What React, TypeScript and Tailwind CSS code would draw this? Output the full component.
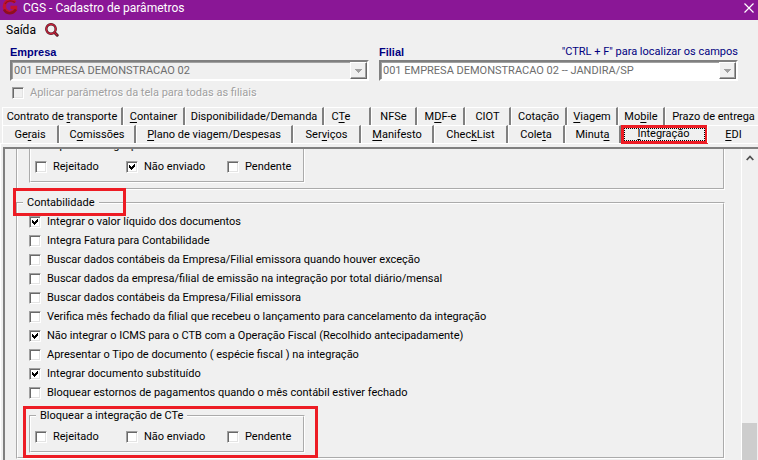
import { useState } from "react";
import type { ReactNode } from "react";

const TABS_TOP = [
  { id: "contrato", label: <>Contrato de <u>t</u>ransporte</>, width: "w-[121px]" },
  { id: "container", label: <><u>C</u>ontainer</>, width: "w-[62px]" },
  { id: "disponibilidade", label: <>Disponibilidade/Demanda</>, width: "w-[139px]" },
  { id: "cte", label: <>C<u>T</u>e</>, width: "w-[47px] pr-[12px]" },
  { id: "nfse", label: <>NFSe</>, width: "w-[46px]" },
  { id: "mdfe", label: <>M<u>D</u>F-e</>, width: "w-[48px]" },
  { id: "ciot", label: <>CIOT</>, width: "w-[46px]" },
  { id: "cotacao", label: <>Cotação</>, width: "w-[56px]" },
  { id: "viagem", label: <><u>V</u>iagem</>, width: "w-[51px]" },
  { id: "mobile", label: <>Mo<u>b</u>ile</>, width: "w-[47px]" },
  { id: "prazo", label: <>Prazo de entrega</>, width: "w-[96px]" },
];

const TABS_BOTTOM = [
  { id: "gerais", label: <>Ge<u>r</u>ais</>, width: "w-[57px]" },
  { id: "comissoes", label: <>C<u>o</u>missões</>, width: "w-[77px]" },
  { id: "plano", label: <><u>P</u>lano de viagem/Despesas</>, width: "w-[157px]" },
  { id: "servicos", label: <>Ser<u>v</u>iços</>, width: "w-[68px]" },
  { id: "manifesto", label: <><u>M</u>anifesto</>, width: "w-[73px]" },
  { id: "checklist", label: <>Chec<u>k</u>List</>, width: "w-[74px]" },
  { id: "coleta", label: <>Cole<u>t</u>a</>, width: "w-[57px]" },
  { id: "minuta", label: <>Minut<u>a</u></>, width: "w-[56px]" },
  { id: "integracao", label: <><u>I</u>ntegração</>, width: "w-[86px]" },
  { id: "edi", label: <><u>E</u>DI</>, width: "w-[52px]" },
];

const OPTIONS = [
  { label: "Integrar o valor líquido dos documentos", checked: true },
  { label: "Integra Fatura para Contabilidade" },
  { label: "Buscar dados contábeis da Empresa/Filial emissora quando houver exceção" },
  { label: "Buscar dados da empresa/filial de emissão na integração por total diário/mensal" },
  { label: "Buscar dados contábeis da Empresa/Filial emissora" },
  { label: "Verifica mês fechado da filial que recebeu o lançamento para cancelamento da integração" },
  { label: "Não integrar o ICMS para o CTB com a Operação Fiscal (Recolhido antecipadamente)", checked: true },
  { label: "Apresentar o Tipo de documento ( espécie fiscal ) na integração" },
  { label: "Integrar documento substituído", checked: true },
  { label: "Bloquear estornos de pagamentos quando o mês contábil estiver fechado" },
];

function Check({ label, checked = false, disabled = false }: { label: string; checked?: boolean; disabled?: boolean }) {
  return (
    <label className={`flex items-center gap-[6px] whitespace-nowrap ${disabled ? "text-[#a0a0a0] [text-shadow:1px_1px_0_#fff]" : ""}`}>
      <span className="grid size-3 shrink-0">
        <input
          type="checkbox"
          defaultChecked={checked}
          disabled={disabled}
          className="peer col-start-1 row-start-1 size-3 appearance-none border border-t-[#a0a0a0] border-l-[#a0a0a0] border-r-white border-b-white bg-white shadow-[inset_1px_1px_0_#696969,inset_-1px_-1px_0_#e3e3e3] disabled:bg-[#f0f0f0]"
        />
        <svg viewBox="0 0 12 12" className="pointer-events-none invisible col-start-1 row-start-1 size-3 peer-checked:visible" shapeRendering="crispEdges">
          <path d="M3 4h1v1h1v1h1v-1h1v-1h1v-1h1v3h-1v1h-1v1h-1v1h-1v-1h-1v-1h-1z" fill="#000" />
        </svg>
      </span>
      {label}
    </label>
  );
}

function Group({ title, className = "", children }: { title: string; className?: string; children: ReactNode }) {
  return (
    <fieldset className={`min-w-0 border-2 border-white [border-style:groove] ${className}`}>
      <legend className="px-1 leading-[14px]">{title}</legend>
      {children}
    </fieldset>
  );
}

function BloquearCte({ enviado = false }: { enviado?: boolean }) {
  return (
    <Group title="Bloquear a integração de CTe" className="w-[276px] px-1 pt-[5px] pb-[5px] [&>legend]:ml-px">
      <div className="grid h-[18px] grid-cols-[91px_101px_auto] items-center">
        <Check label="Rejeitado" />
        <Check label="Não enviado" checked={enviado} />
        <Check label="Pendente" />
      </div>
    </Group>
  );
}

function Combo({ id, value, fill }: { id: string; value: string; fill: string }) {
  return (
    <div className="relative">
      <select
        id={id}
        disabled
        className={`block h-[21px] w-full appearance-none border-2 border-t-[#808080] border-l-[#808080] border-r-white border-b-white pl-[2px] text-[11px] leading-4 text-[#6d6d6d] opacity-100 shadow-[inset_1px_1px_0_#a0a0a0] ${fill}`}
      >
        <option>{value}</option>
      </select>
      <span className="pointer-events-none absolute inset-y-[2px] right-[2px] flex w-[17px] items-center justify-center border border-t-white border-l-white border-r-[#696969] border-b-[#696969] bg-[#f0f0f0] shadow-[inset_-1px_-1px_0_#a0a0a0]">
        <svg viewBox="0 0 7 4" className="h-1 w-[7px]" shapeRendering="crispEdges">
          <path d="M0 0h7v1h-1v1h-1v1h-1v1h-1v-1h-1v-1h-1v-1h-1z" fill="#a0a0a0" />
        </svg>
      </span>
    </div>
  );
}

export default function App() {
  const [tab, setTab] = useState("integracao");

  const renderTab = (t: { id: string; label: ReactNode; width: string }) => {
    const active = t.id === tab;
    return (
      <button
        key={t.id}
        role="tab"
        aria-selected={active}
        onClick={() => setTab(t.id)}
        className={`relative h-[18px] shrink-0 whitespace-nowrap border-t border-l border-r-2 border-t-white border-l-white border-r-[#808080] text-center last:border-r-0 ${active ? "pb-[2px] leading-[14px]" : "leading-[16px]"} ${t.width}`}
      >
        {t.label}
        {active && (
          <span className="pointer-events-none absolute -top-px -right-[3px] -bottom-px -left-px border-[3px] border-[#ed1c24]">
            <span className="absolute inset-0 border border-dotted border-black" />
          </span>
        )}
      </button>
    );
  };

  return (
    <div className="flex h-screen flex-col overflow-hidden bg-[#f0f0f0] font-[Roboto,sans-serif] text-[11px] leading-4 text-black [&_u]:underline-offset-2">
      {/* Title bar */}
      <header className="flex h-5 shrink-0 items-center bg-[#8a1796] text-white">
        <svg viewBox="0 0 18 20" className="ml-px h-5 w-[18px]" fill="none">
          <path d="M14 2.500A6 6 0 1 0 14.500 9.500V7.500H9.500" stroke="#c4122f" strokeWidth="3.400" />
          <path d="M3 9.500C5 14 11 15 15 9.500" stroke="#8c1020" strokeWidth="2.400" />
          <path d="M14 2.500C10.500 0 6 0.500 4 4" stroke="#8c1020" strokeWidth="1.200" />
        </svg>
        <h1 className="ml-1 flex-1 pb-1 text-[12px] leading-4">CGS - Cadastro de parâmetros</h1>
        <button aria-label="Fechar" className="mr-[4px] pb-1">
          <svg viewBox="0 0 10 10" className="size-[10px]">
            <path d="M0.500 0.500L9.500 9.500M9.500 0.500L0.500 9.500" stroke="#fff" strokeWidth="1.200" />
          </svg>
        </button>
      </header>

      {/* Menu */}
      <nav className="flex h-5 shrink-0 items-center gap-[9px] pl-[6px] text-[12px]">
        <button>Saída</button>
        <button aria-label="Localizar">
          <svg viewBox="0 0 14 14" className="size-[14px]" fill="none">
            <path d="M9.500 9.500L12.200 12.200" stroke="#4a1a22" strokeWidth="3" strokeLinecap="round" />
            <circle cx="6" cy="6" r="4.700" stroke="#4a1a22" strokeWidth="2.400" />
            <circle cx="6" cy="6" r="4.700" stroke="#c8203a" strokeWidth="1.400" />
            <path d="M9.800 9.800L12 12" stroke="#c8203a" strokeWidth="1.200" strokeLinecap="round" />
          </svg>
        </button>
      </nav>

      <div className="grid shrink-0 grid-cols-2 gap-[10px] pt-[4px] pr-5 pl-[10px]">
        <div>
          <label htmlFor="empresa" className="block font-['Liberation_Sans',sans-serif] font-bold text-[#000080]">
            Empresa
          </label>
          <Combo id="empresa" value="001 EMPRESA DEMONSTRACAO 02" fill="bg-[#f0f0f0]" />
        </div>
        <div>
          <div className="flex justify-between text-[#000080]">
            <label htmlFor="filial" className="font-['Liberation_Sans',sans-serif] font-bold">
              Filial
            </label>
            <span>"CTRL + F" para localizar os campos</span>
          </div>
          <Combo id="filial" value="001 EMPRESA DEMONSTRACAO 02 -- JANDIRA/SP" fill="bg-white" />
        </div>
      </div>
      <div className="flex h-[26px] shrink-0 items-start pt-1 pl-3">
        <Check label="Aplicar parâmetros da tela para todas as filiais" disabled />
      </div>

      {/* Tabs */}
      <div role="tablist" className="shrink-0 pl-[2px]">
        <div className="flex">{TABS_TOP.map(renderTab)}</div>
        <div className="flex">{TABS_BOTTOM.map(renderTab)}</div>
      </div>

      <div className="flex min-h-0 flex-1 border-t border-l border-white pt-[3px] pl-[2px]">
        <main className="flex min-w-0 flex-1 overflow-hidden border-t-2 border-l-2 border-[#808080]">
          <div className="-mt-[10px] min-w-0 flex-1 pr-4 pl-[11px]">
            <div className="mb-[6px] border-2 border-t-0 border-white pb-[5px] pl-[11px] [border-style:groove]">
              <BloquearCte enviado />
            </div>
            <div className="relative">
              <Group title="Contabilidade" className="pt-[2px] pb-1 pl-[11px] [&>legend]:ml-[-6px]">
                {OPTIONS.map((o) => (
                  <div key={o.label} className="flex h-[19px] items-center">
                    <Check label={o.label} checked={o.checked} />
                  </div>
                ))}
                <div className="relative mt-[7px] w-[276px]">
                  <BloquearCte />
                  <span className="pointer-events-none absolute -top-[3px] -right-[13px] -bottom-[5px] -left-[6px] border-[3px] border-[#ed1c24]" />
                </div>
              </Group>
              <span className="pointer-events-none absolute -top-2 -left-[3px] h-[28px] w-[113px] border-[3px] border-[#ed1c24]" />
            </div>
          </div>

          <div className="flex w-[17px] shrink-0 flex-col border-l border-white">
            <button aria-label="Rolar para cima" className="flex h-[17px] items-center justify-center">
              <svg viewBox="0 0 8 6" className="h-[6px] w-2" fill="none">
                <path d="M0.700 5L4 1.500L7.300 5" stroke="#505050" strokeWidth="1.800" />
              </svg>
            </button>
            <div className="flex flex-1 items-end pr-px">
              <div className="h-[37px] w-full bg-[#cdcdcd]" />
            </div>
          </div>
        </main>
      </div>
    </div>
  );
}
